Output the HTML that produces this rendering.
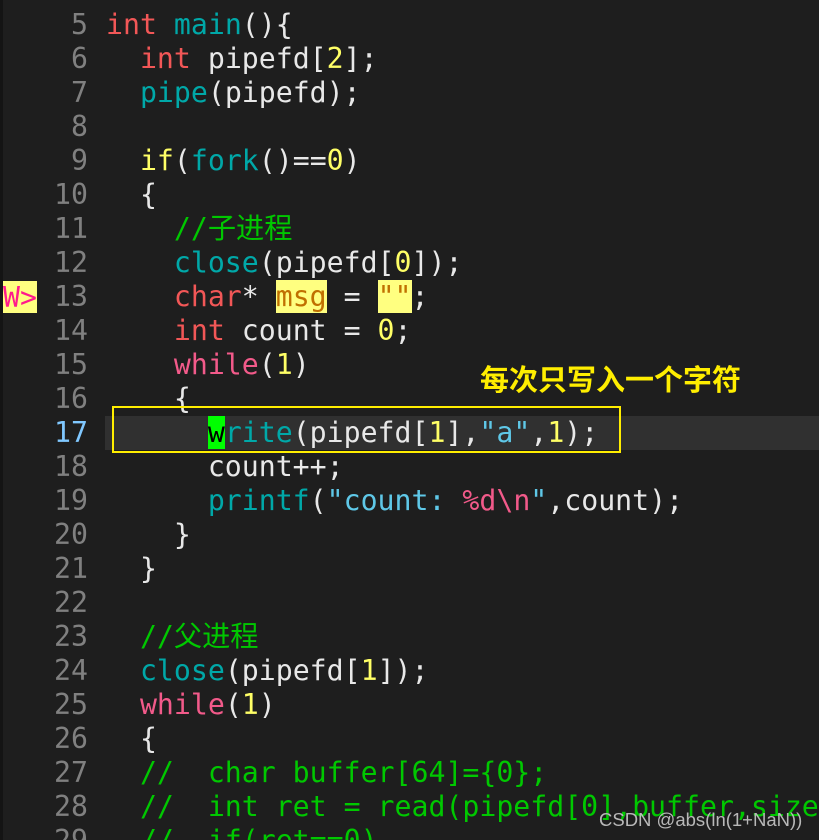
<!DOCTYPE html>
<html style="height:840px;overflow:hidden"><head><meta charset="utf-8"><style>
body{margin:0;width:819px;height:840px;background:#1e1e1e;overflow:hidden;position:relative;font-family:"DejaVu Sans Mono","Liberation Mono","Noto Sans CJK SC",monospace;font-size:28.2px;color:#e8e8e8}
.l{position:absolute;left:0;height:34px;line-height:34px;white-space:pre;width:819px}
.n{position:absolute;left:30px;width:58px;text-align:right;color:#808080}
.c{position:absolute;left:106px}
.k{color:#f25757}.w{color:#f2507a}.f{color:#00a8a8}.d{color:#ffff66}.s{color:#5fc8e8}.g{color:#00c800}.p{color:#f25a8a}
</style></head><body>
<div style="position:absolute;left:0;top:0;width:3px;height:840px;background:#141414"></div>
<div style="position:absolute;left:105px;top:416px;width:714px;height:34px;background:#303030"></div>
<div class="l" style="top:8px"><span class="n">5</span><span class="c"><span class="k">int</span> <span class="f">main</span>(){</span></div>
<div class="l" style="top:42px"><span class="n">6</span><span class="c">  <span class="k">int</span> pipefd[<span class="d">2</span>];</span></div>
<div class="l" style="top:76px"><span class="n">7</span><span class="c">  <span class="f">pipe</span>(pipefd);</span></div>
<div class="l" style="top:110px"><span class="n">8</span></div>
<div class="l" style="top:144px"><span class="n">9</span><span class="c">  <span class="d">if</span>(<span class="f">fork</span>()==<span class="d">0</span>)</span></div>
<div class="l" style="top:178px"><span class="n">10</span><span class="c">  {</span></div>
<div class="l" style="top:212px"><span class="n">11</span><span class="c">    <span class="g">//子进程</span></span></div>
<div class="l" style="top:246px"><span class="n">12</span><span class="c">    <span class="f">close</span>(pipefd[<span class="d">0</span>]);</span></div>
<div class="l" style="top:280px"><span style="position:absolute;left:3px;top:1px;width:34px;height:32px;background:#ffff80;color:#ff1a8c">W&gt;</span><span class="n">13</span><span class="c">    <span class="k">char</span>* <span style="background:#ffff80;color:#c07000">msg</span> = <span style="background:#ffff80;color:#c07000">""</span>;</span></div>
<div class="l" style="top:314px"><span class="n">14</span><span class="c">    <span class="k">int</span> count = <span class="d">0</span>;</span></div>
<div class="l" style="top:348px"><span class="n">15</span><span class="c">    <span class="p">while</span>(<span class="d">1</span>)</span></div>
<div class="l" style="top:382px"><span class="n">16</span><span class="c">    {</span></div>
<div class="l" style="top:416px"><span class="n" style="color:#80c8ff">17</span><span class="c">      <span style="background:#00ff00;color:#000">w</span><span class="f">rite</span>(pipefd[<span class="d">1</span>],<span class="s">"a"</span>,<span class="d">1</span>);</span></div>
<div class="l" style="top:450px"><span class="n">18</span><span class="c">      count++;</span></div>
<div class="l" style="top:484px"><span class="n">19</span><span class="c">      <span class="f">printf</span>(<span class="s">"count: </span><span class="p">%d\n</span><span class="s">"</span>,count);</span></div>
<div class="l" style="top:518px"><span class="n">20</span><span class="c">    }</span></div>
<div class="l" style="top:552px"><span class="n">21</span><span class="c">  }</span></div>
<div class="l" style="top:586px"><span class="n">22</span></div>
<div class="l" style="top:620px"><span class="n">23</span><span class="c">  <span class="g">//父进程</span></span></div>
<div class="l" style="top:654px"><span class="n">24</span><span class="c">  <span class="f">close</span>(pipefd[<span class="d">1</span>]);</span></div>
<div class="l" style="top:688px"><span class="n">25</span><span class="c">  <span class="p">while</span>(<span class="d">1</span>)</span></div>
<div class="l" style="top:722px"><span class="n">26</span><span class="c">  {</span></div>
<div class="l" style="top:756px"><span class="n">27</span><span class="c">  <span class="g">//  char buffer[64]={0};</span></span></div>
<div class="l" style="top:790px"><span class="n">28</span><span class="c">  <span class="g">//  int ret = read(pipefd[0],buffer,sizeof</span></span></div>
<div class="l" style="top:824px"><span class="n">29</span><span class="c">  <span class="g">//  if(ret==0)</span></span></div>
<div style="position:absolute;left:112px;top:406px;width:505px;height:43px;border:2px solid #ffee00"></div>
<div style="position:absolute;left:480px;top:360px;font-family:'Noto Sans CJK SC',sans-serif;font-weight:bold;font-size:29px;color:#ffee00;line-height:36px;white-space:nowrap">每次只写入一个字符</div>
<div style="position:absolute;left:599px;top:807px;font-family:'Liberation Sans',sans-serif;font-size:18.5px;color:#b8b8b8;line-height:26px;white-space:nowrap">CSDN @abs(ln(1+NaN))</div>
</body></html>
